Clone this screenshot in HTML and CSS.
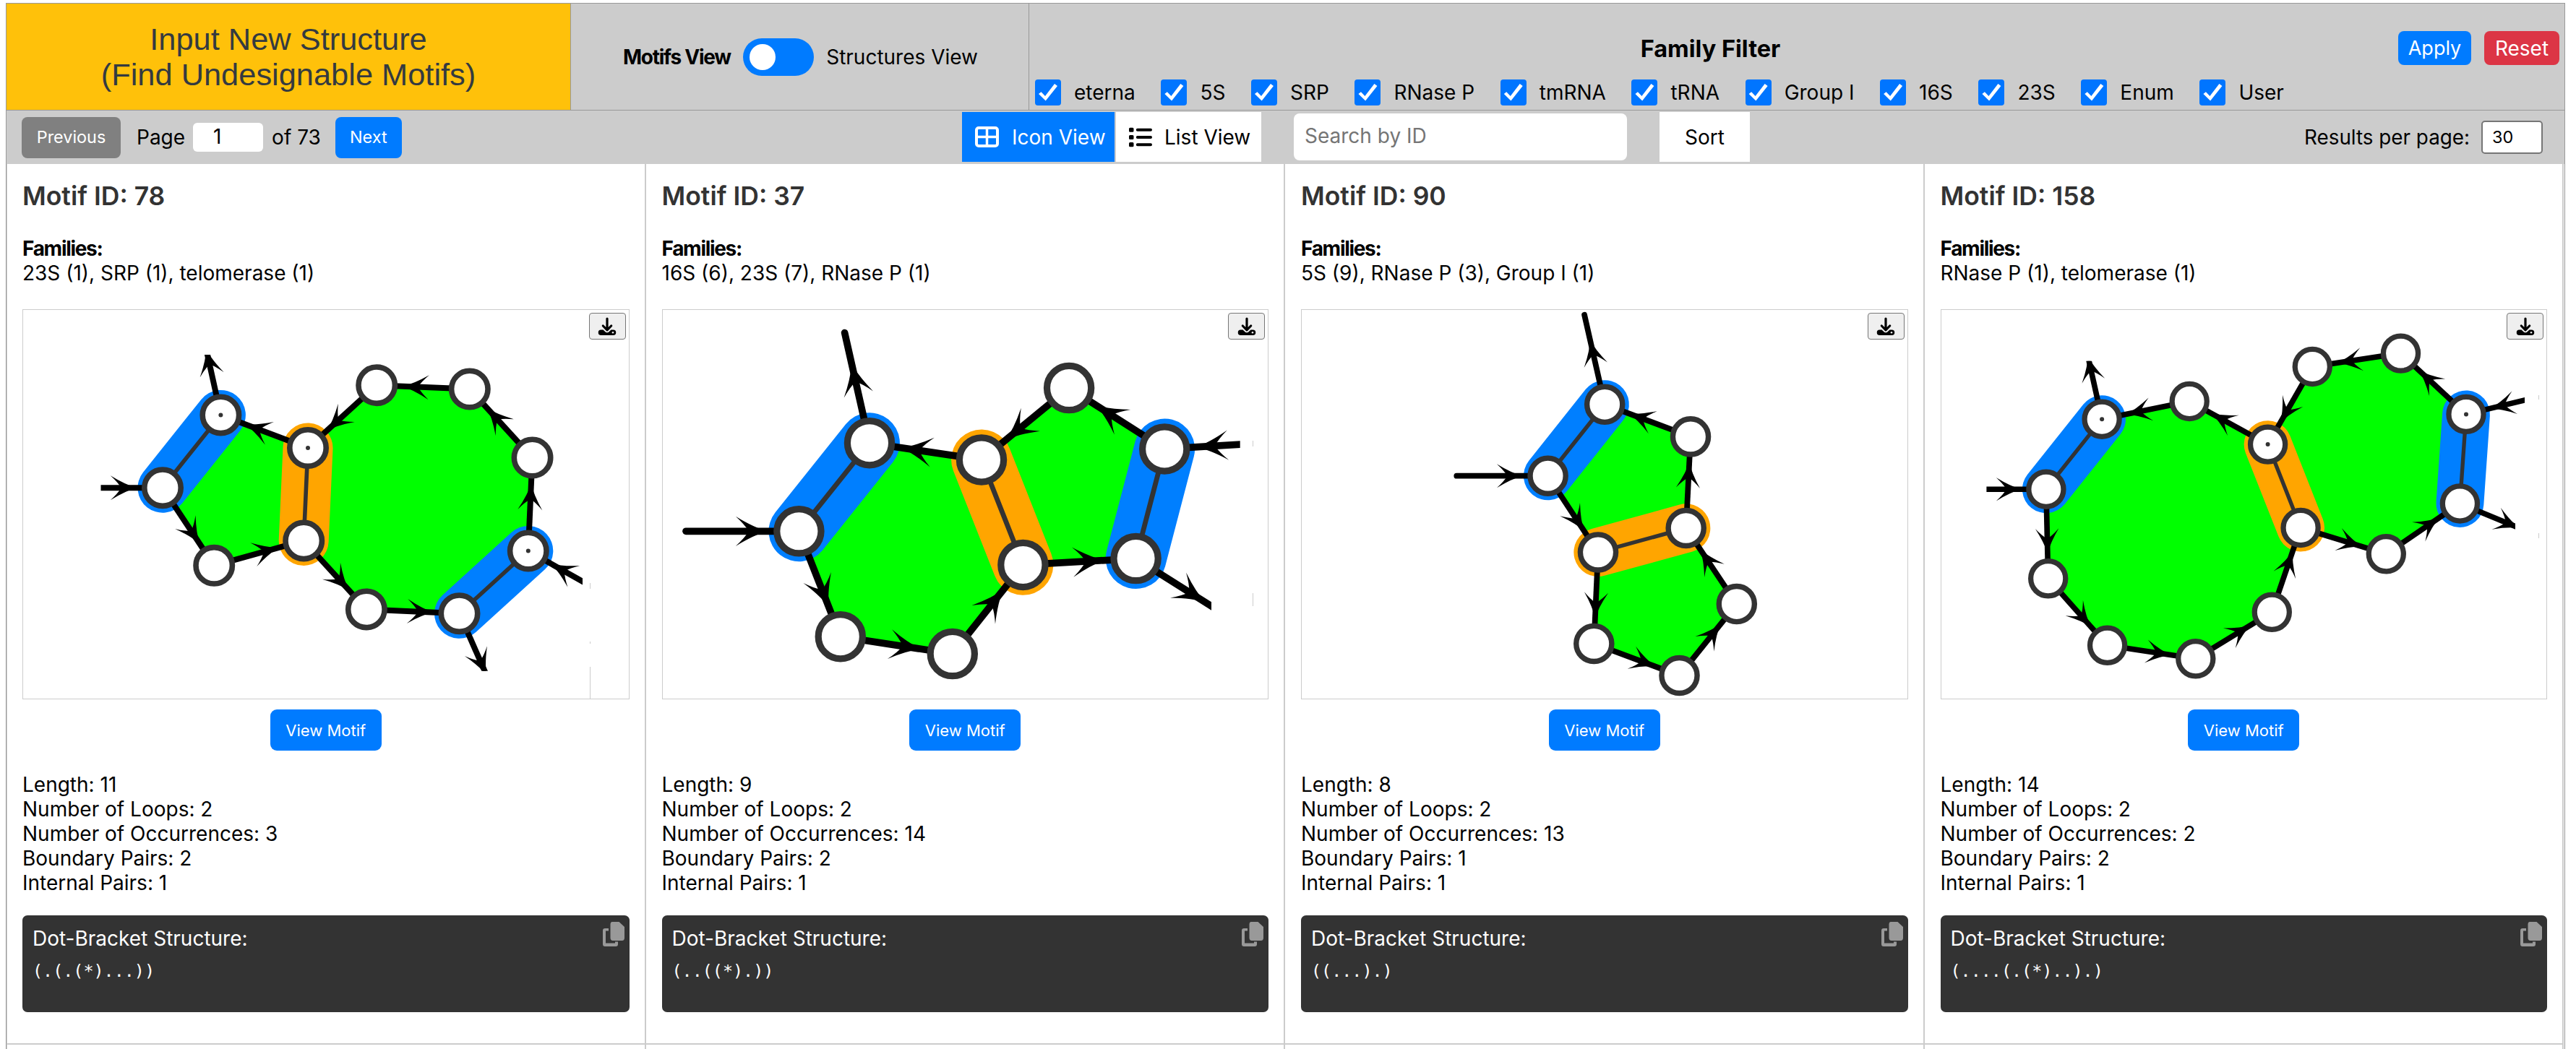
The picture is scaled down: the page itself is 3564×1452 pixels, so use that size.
FILE: index.html
```html
<!DOCTYPE html>
<html lang="en">
<head>
<meta charset="utf-8">
<title>Undesignable Motifs</title>
<link rel="stylesheet" href="styles.css">
</head>
<body>
<svg class="defs" width="0" height="0" aria-hidden="true">
  <symbol id="i-download" viewBox="0 0 26 26">
    <path d="M13 2V17M7.300 12 13 17.800 18.700 12" fill="none" stroke="#000" stroke-width="3.200" stroke-linecap="round" stroke-linejoin="round"/>
    <path d="M4.500 17.500H7.500L11 20.700Q13 22 15 20.700L18.500 17.500H21.500A3.700 3.700 0 0 1 21.500 25H4.500A3.700 3.700 0 0 1 4.500 17.500Z"/>
    <circle cx="21" cy="21.300" r="1.300" fill="#efefef"/>
  </symbol>
  <symbol id="i-copy" viewBox="0 0 30 34">
    <path d="M13 0H22.500L30 7V22Q30 26 26.500 26H14Q10.500 26 10.500 22V3.500Q10.500 0 13 0Z"/>
    <path d="M8 9V12.500H4V29.500H17V27.500H21V31Q21 34 18 34H3Q0 34 0 31V12Q0 9 3 9Z"/>
  </symbol>
</svg>
<div class="app">
  <header class="top">
    <button class="new-structure">Input New Structure<br>(Find Undesignable Motifs)</button>
    <div class="mode">
      <span class="mode-on">Motifs View</span>
      <span class="switch"><span class="knob"></span></span>
      <span>Structures View</span>
    </div>
    <section class="filter">
      <div class="filter-head">
        <h2>Family Filter</h2>
        <button class="btn apply">Apply</button>
        <button class="btn reset">Reset</button>
      </div>
      <div class="checks">
        <label><i class="box"></i>eterna</label>
        <label><i class="box"></i>5S</label>
        <label><i class="box"></i>SRP</label>
        <label><i class="box"></i>RNase P</label>
        <label><i class="box"></i>tmRNA</label>
        <label><i class="box"></i>tRNA</label>
        <label><i class="box"></i>Group I</label>
        <label><i class="box"></i>16S</label>
        <label><i class="box"></i>23S</label>
        <label><i class="box"></i>Enum</label>
        <label><i class="box"></i>User</label>
      </div>
    </section>
  </header>

  <nav class="toolbar">
    <div class="pager">
      <button class="page-btn prev">Previous</button>
      <span class="page-label">Page</span>
      <span class="page-input">1</span>
      <span class="page-total">of 73</span>
      <button class="page-btn next">Next</button>
    </div>
    <div class="tools">
      <button class="view active">
        <svg width="33" height="29" viewBox="0 0 33 29"><rect x="2" y="2" width="29" height="25" rx="3" fill="none" stroke="#fff" stroke-width="4"/><path d="M16.500 2V27M2 14.500H31" stroke="#fff" stroke-width="3.500"/></svg>
        Icon View
      </button>
      <button class="view list">
        <svg width="32" height="28" viewBox="0 0 32 28"><path d="M0 2.200Q0 .7 1.500 .7H5Q6.500 .7 6.500 2.200V5.300Q6.500 6.800 5 6.800H1.500Q0 6.800 0 5.300ZM0 12.400Q0 10.900 1.500 10.900H5Q6.500 10.900 6.500 12.400V15.500Q6.500 17 5 17H1.500Q0 17 0 15.500ZM0 22.600Q0 21.100 1.500 21.100H5Q6.500 21.100 6.500 22.600V25.700Q6.500 27.200 5 27.200H1.500Q0 27.200 0 25.700Z"/><path d="M11.800 3.800H30M11.800 14H30M11.800 24.200H30" stroke="#000" stroke-width="4" stroke-linecap="round"/></svg>
        List View
      </button>
      <span class="search">Search by ID</span>
      <button class="view sort">Sort</button>
    </div>
    <div class="per-page">
      <span>Results per page:</span>
      <span class="count">30</span>
    </div>
  </nav>

  <main class="grid">
    <article class="card">
      <h3>Motif ID: 78</h3>
      <p class="families"><b>Families:</b><br>23S (1), SRP (1), telomerase (1)</p>
      <div class="plot"><svg data-motif="78" viewBox="1 1 838 538"></svg><button class="dl"><svg><use href="#i-download"/></svg></button></div>
      <button class="view-motif">View Motif</button>
      <p class="stats">Length: 11<br>Number of Loops: 2<br>Number of Occurrences: 3<br>Boundary Pairs: 2<br>Internal Pairs: 1</p>
      <div class="code"><span>Dot-Bracket Structure:</span><code>(.(.(*)...))</code><svg class="copy"><use href="#i-copy"/></svg></div>
    </article>
    <article class="card">
      <h3>Motif ID: 37</h3>
      <p class="families"><b>Families:</b><br>16S (6), 23S (7), RNase P (1)</p>
      <div class="plot"><svg data-motif="37" viewBox="1 1 838 538"></svg><button class="dl"><svg><use href="#i-download"/></svg></button></div>
      <button class="view-motif">View Motif</button>
      <p class="stats">Length: 9<br>Number of Loops: 2<br>Number of Occurrences: 14<br>Boundary Pairs: 2<br>Internal Pairs: 1</p>
      <div class="code"><span>Dot-Bracket Structure:</span><code>(..((*).))</code><svg class="copy"><use href="#i-copy"/></svg></div>
    </article>
    <article class="card">
      <h3>Motif ID: 90</h3>
      <p class="families"><b>Families:</b><br>5S (9), RNase P (3), Group I (1)</p>
      <div class="plot"><svg data-motif="90" viewBox="1 1 838 538"></svg><button class="dl"><svg><use href="#i-download"/></svg></button></div>
      <button class="view-motif">View Motif</button>
      <p class="stats">Length: 8<br>Number of Loops: 2<br>Number of Occurrences: 13<br>Boundary Pairs: 1<br>Internal Pairs: 1</p>
      <div class="code"><span>Dot-Bracket Structure:</span><code>((...).)</code><svg class="copy"><use href="#i-copy"/></svg></div>
    </article>
    <article class="card">
      <h3>Motif ID: 158</h3>
      <p class="families"><b>Families:</b><br>RNase P (1), telomerase (1)</p>
      <div class="plot"><svg data-motif="158" viewBox="1 1 838 538"></svg><button class="dl"><svg><use href="#i-download"/></svg></button></div>
      <button class="view-motif">View Motif</button>
      <p class="stats">Length: 14<br>Number of Loops: 2<br>Number of Occurrences: 2<br>Boundary Pairs: 2<br>Internal Pairs: 1</p>
      <div class="code"><span>Dot-Bracket Structure:</span><code>(....(.(*)..).)</code><svg class="copy"><use href="#i-copy"/></svg></div>
    </article>
    <div class="next-row"></div><div class="next-row"></div><div class="next-row"></div><div class="next-row"></div>
  </main>
</div>
<script src="motifs.js"></script>
</body>
</html>
```

FILE: styles.css
```css
* { box-sizing: border-box; }
html, body { margin: 0; background: #fff; }
body {
  height: 1452px;
  padding: 4px 15px 0 8px;
  overflow: hidden;
  font: 28px/34px Inter, "Liberation Sans", sans-serif;
  color: #000;
}
button { border: 0; margin: 0; padding: 0; font: inherit; color: inherit; }
h2, h3, p { margin: 0; }
svg { display: block; }
.defs { position: absolute; }

.app { height: 1448px; border: 1px solid #999; border-bottom: 0; overflow: hidden; }

/* header */
.top { display: flex; height: 148px; background: #ccc; border-bottom: 1px solid #999; }
.new-structure {
  width: 781px;
  background: #ffc10a;
  border-right: 1px solid #999;
  color: #343a40;
  font: 43.4px/48.5px "Liberation Sans", Arial, sans-serif;
}
.mode {
  display: flex;
  align-items: center;
  justify-content: space-between;
  width: 634px;
  padding: 1px 70px 0 72px;
  border-right: 1px solid #999;
}
.mode-on { font-weight: 700; letter-spacing: -1.25px; }
.switch { display: flex; align-items: center; width: 98px; height: 52px; padding-left: 9px; border-radius: 26px; background: #007bff; }
.knob { width: 36px; height: 36px; border-radius: 50%; background: #fff; }
.filter { flex: 1; padding: 38px 7px 0 8px; }
.filter-head { display: flex; align-items: center; height: 47px; }
.filter-head h2 { flex: 1; padding: 3px 16px 0 0; text-align: center; font-size: 32.500px; line-height: 38px; font-weight: 700; }
.btn { height: 47px; border-radius: 8px; color: #fff; }
.apply { width: 101px; margin-left: 1px; background: #007bff; font-size: 27px; }
.reset { width: 104px; margin-left: 18px; background: #dc3545; }
.checks { display: flex; gap: 35.600px; margin-top: 20px; }
.checks label { display: flex; gap: 18px; line-height: 37px; white-space: nowrap; }
.box { width: 36px; height: 36px; border-radius: 4px; background: #0075ff; }
.box::after {
  content: "";
  display: block;
  width: 36px;
  height: 36px;
  background: #fff;
  clip-path: polygon(5px 20px, 8.500px 17.200px, 14px 23px, 27px 6px, 31px 9px, 14.700px 29.500px);
}

/* toolbar */
.toolbar { display: flex; height: 74px; background: #ccc; }
.pager { display: flex; align-items: center; width: 1322px; padding-left: 21px; }
.page-btn { height: 57px; border-radius: 8px; color: #fff; font-size: 23.400px; }
.prev { width: 137px; background: #808080; }
.next { width: 92px; margin-left: 20px; background: #007bff; }
.page-label { margin-left: 22px; }
.page-input { width: 97px; height: 40px; margin-left: 11px; padding-left: 28px; border-radius: 6px; background: #fff; line-height: 39px; }
.page-total { margin-left: 12px; }
.tools { display: flex; align-items: flex-start; padding-top: 2px; }
.view { display: flex; align-items: center; height: 69px; background: #fff; }
.active { width: 211px; padding-left: 18px; gap: 18px; background: #007bff; color: #fff; }
.list { width: 201px; margin-left: 2px; padding-left: 18px; gap: 17px; }
.search { width: 461px; height: 65px; margin: 2px 45px 0; padding-left: 15px; border-radius: 8px; background: #fff; color: #757575; line-height: 63px; }
.sort { width: 125px; justify-content: center; }
.per-page { display: flex; align-items: center; margin-left: auto; padding-right: 30px; font-size: 27.800px; }
.count { width: 85px; height: 46px; margin-left: 16px; padding-left: 13px; border: 2px solid #767676; border-radius: 5px; background: #fff; font-size: 23.400px; line-height: 42px; }

/* results */
.grid { display: grid; grid-template-columns: repeat(4, 884.500px); grid-template-rows: 1219px 40px; box-shadow: inset 1px 0 #ccc; }
.card { display: flex; flex-direction: column; padding: 24px 21px 0 22px; border: solid #ccc; border-width: 0 2px 2px 0; }
.next-row { border-right: 2px solid #ccc; }
.card h3 { margin-bottom: 33.500px; font-size: 35.500px; font-weight: 600; line-height: 42px; color: #333; }
.families { margin-bottom: 33.500px; }
.families b { letter-spacing: -1.300px; }
.plot { position: relative; height: 540px; border: 1px solid #ccc; }
.plot > svg { width: 838px; height: 538px; }
.dl { position: absolute; top: 4px; right: 4px; display: flex; align-items: center; justify-content: center; width: 51px; height: 37px; border: 1px solid #767676; border-radius: 4px; background: #efefef; }
.dl svg { width: 26px; height: 26px; }
.view-motif { align-self: center; width: 154px; height: 57px; margin: 14px 0 30px; border-radius: 9px; background: #007bff; color: #fff; font-size: 22px; }
.code { position: relative; display: flex; flex-direction: column; gap: 14px; height: 134px; margin-top: 28px; padding: 15px 14px; border-radius: 7px; background: #333; color: #fff; }
.code code { font: 23.400px/28px "DejaVu Sans Mono", monospace; }
.copy { position: absolute; top: 9px; right: 7px; width: 30px; height: 34px; fill: #999; }
```

FILE: motifs.js
```js
// Each motif: node positions, backbone walks, paired nodes and the open stubs at its boundary.
// A stub is [x1, y1, x2, y2, visible area as x, y, width, height] and is rounded when unclipped.
const MOTIFS = {
  78: {
    scale: 1,
    nodes: { A: [194, 247.2], B: [274.4, 146.4], C: [395, 192], D: [389.2, 320.4], E: [265.2, 354.8], F: [490.2, 105.2], G: [618.8, 110.5], H: [705.5, 205.5], I: [699.8, 334.5], J: [604.5, 421.2], K: [475.9, 415.4] },
    walks: ['AEDKJ', 'IHGFCB'],
    boundary: ['AB', 'IJ'], internal: 'CD', marked: 'BCI',
    stubs: [
      [65, 247.2, 194, 247.2, [108.5, 0, 200, 538]],
      [274.4, 146.4, 246.6, 20.4, [0, 63, 838, 400]],
      [812.3, 397.8, 699.8, 334.5, [600, 0, 175, 538]],
      [604.5, 421.2, 656.5, 539.2, [0, 0, 838, 500.7]]
    ],
    ticks: [[785.5, 379, 387], [785.5, 460, 463], [785.5, 495, 539]]
  },
  37: {
    scale: 1.215,
    nodes: { A: [189.4, 307.3], B: [287, 185.2], C: [442, 208.4], D: [499.4, 353.9], E: [401.8, 477], F: [246.8, 453.2], G: [563.1, 109.1], H: [695.2, 193.4], I: [655.6, 345.1] },
    walks: ['AFEDI', 'HGCB'],
    boundary: ['AB', 'HI'], internal: 'CD', marked: '',
    stubs: [
      [33, 307.3, 189.4, 307.3],
      [287, 185.2, 252.6, 32.5],
      [851.9, 184, 695.2, 193.4, [600, 0, 199.7, 538]],
      [655.6, 345.1, 788.4, 428.8, [600, 0, 160, 538]]
    ],
    ticks: [[817.5, 182, 190], [817.5, 393, 411]]
  },
  90: {
    scale: 0.975,
    nodes: { A: [341.6, 230.7], B: [420.2, 131.8], C: [539, 176.4], D: [532.7, 303], E: [411, 336.4], F: [405.3, 462.9], G: [523.5, 507], H: [602.8, 408.1] },
    walks: ['AEFGHDCB'],
    boundary: ['AB'], internal: 'ED', marked: '',
    stubs: [
      [215.3, 230.7, 341.6, 230.7],
      [420.2, 131.8, 392.1, 7.8]
    ],
    ticks: []
  },
  158: {
    scale: 0.955,
    nodes: { A: [145.9, 249.2], B: [223.1, 152.2], C: [344.2, 127.5], D: [452.6, 187.1], E: [498.1, 302.5], F: [458.3, 419.3], G: [352.8, 483.8], H: [230.6, 465.3], I: [148.7, 372.8], J: [514.3, 79.5], K: [636.5, 61.1], L: [727, 145.4], M: [718.4, 269], N: [616.3, 338.8] },
    walks: ['AIHGFENM', 'LKJDCB'],
    boundary: ['AB', 'LM'], internal: 'DE', marked: 'BDL',
    stubs: [
      [22.4, 249.2, 145.9, 249.2, [63.4, 0, 200, 538]],
      [223.1, 152.2, 196.3, 31.7, [0, 71.7, 838, 400]],
      [847, 116.5, 727, 145.4, [600, 0, 208, 538]],
      [718.4, 269, 832.6, 316, [600, 0, 195, 538]]
    ],
    ticks: [[827.5, 119, 125], [827.5, 310, 317]]
  }
};

const HEAD = 'M0 0Q-15 3.500-37 17Q-27 8-22 0Q-27-8-37-17Q-15-3.500 0 0Z';

function arrow(x1, y1, x2, y2, s, cap) {
  const dx = x2 - x1, dy = y2 - y1, len = Math.hypot(dx, dy);
  const t = 0.44 + 37 * s / len;
  const deg = Math.atan2(dy, dx) * 180 / Math.PI;
  return `<line x1="${x1}" y1="${y1}" x2="${x2}" y2="${y2}" stroke="#000" stroke-width="${8 * s}" stroke-linecap="${cap}"/>` +
    `<path d="${HEAD}" transform="translate(${x1 + dx * t} ${y1 + dy * t}) rotate(${deg}) scale(${s})"/>`;
}

for (const svg of document.querySelectorAll('[data-motif]')) {
  const id = svg.dataset.motif, m = MOTIFS[id], n = m.nodes, s = m.scale;
  const link = (pair, color, w) => {
    const [p, q] = [n[pair[0]], n[pair[1]]];
    return `<line x1="${p[0]}" y1="${p[1]}" x2="${q[0]}" y2="${q[1]}" stroke="${color}" stroke-width="${w * s}" stroke-linecap="round"/>`;
  };
  let out = `<polygon fill="#0f0" points="${[...m.walks.join('')].map(k => n[k].join()).join(' ')}"/>`;
  for (const b of m.boundary) out += link(b, '#007fff', 69);
  out += link(m.internal, '#ffa500', 69);
  for (const b of [...m.boundary, m.internal]) out += link(b, '#333', 5.6);
  for (const w of m.walks)
    for (let i = 1; i < w.length; i++) out += arrow(...n[w[i - 1]], ...n[w[i]], s, 'butt');
  m.stubs.forEach(([x1, y1, x2, y2, area], i) => {
    if (!area) { out += arrow(x1, y1, x2, y2, s, 'round'); return; }
    const [x, y, w, h] = area, clip = `stub-${id}-${i}`;
    out += `<clipPath id="${clip}"><rect x="${x}" y="${y}" width="${w}" height="${h}"/></clipPath>` +
      `<g clip-path="url(#${clip})">${arrow(x1, y1, x2, y2, s, 'butt')}</g>`;
  });
  for (const k in n) {
    const [x, y] = n[k];
    out += `<circle cx="${x}" cy="${y}" r="${25.2 * s}" fill="#fff" stroke="#333" stroke-width="${7.6 * s}"/>`;
    if (m.marked.includes(k)) out += `<circle cx="${x}" cy="${y}" r="3" fill="#333"/>`;
  }
  for (const [x, y1, y2] of m.ticks) out += `<path d="M${x} ${y1}V${y2}" stroke="#ccc"/>`;
  svg.innerHTML = out;
}
```
